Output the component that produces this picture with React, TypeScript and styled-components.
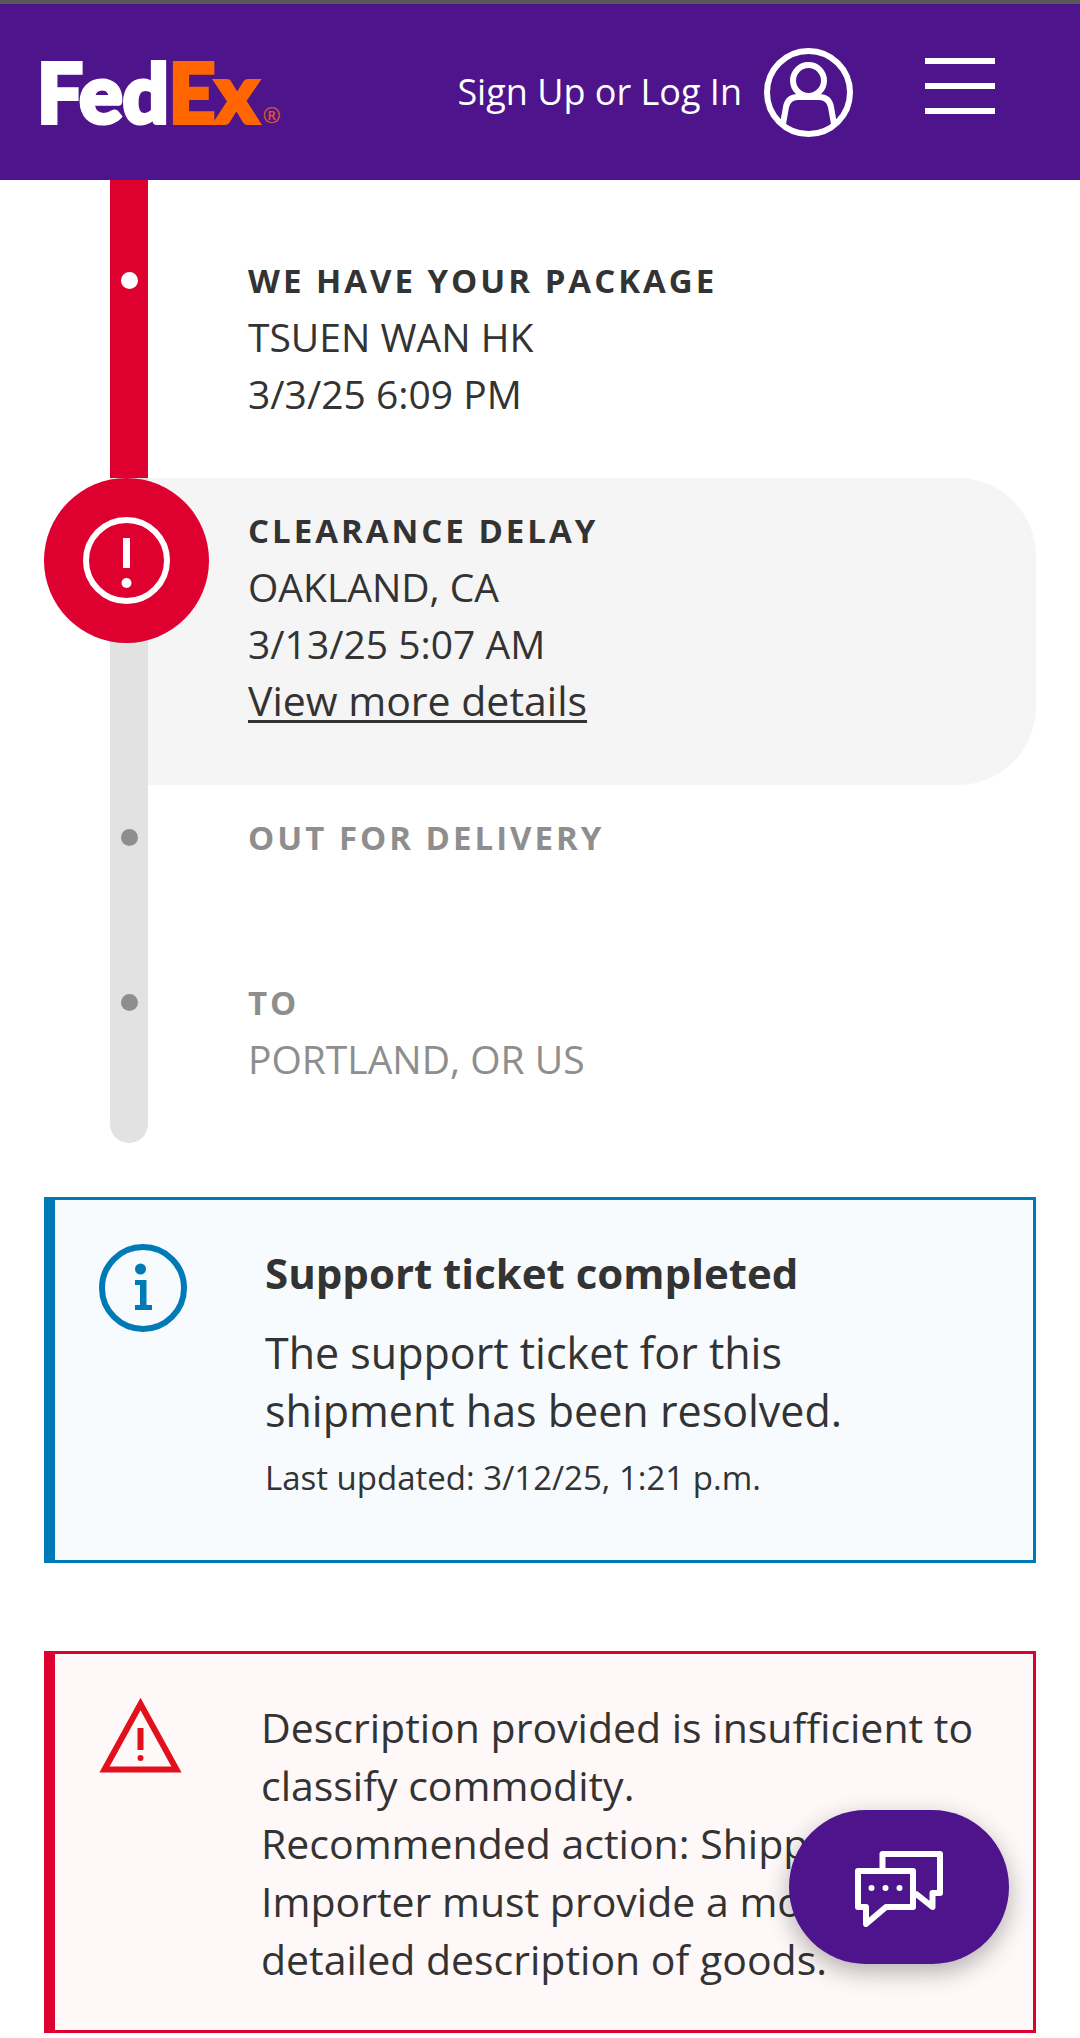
import React from "react";
import styled, { createGlobalStyle, css } from "styled-components";

const color = {
  purple: "#4d148c",
  orange: "#ff6600",
  red: "#de002e",
  alertRed: "#e1101c",
  blue: "#007ab7",
  ink: "#333333",
  muted: "#8e8e8e",
  rail: "#e2e2e2",
  panel: "#f5f5f5",
};

const GlobalStyle = createGlobalStyle`
  *, *::before, *::after { box-sizing: border-box; }
  body {
    margin: 0;
    background: #ffffff;
    color: ${color.ink};
    font-family: "Open Sans", "Noto Sans", sans-serif;
  }
  h2, p, ol { margin: 0; padding: 0; }
`;

const Header = styled.header`
  display: flex;
  align-items: center;
  height: 180px;
  padding: 0 85px 0 37px;
  border-top: 4px solid #5a5858;
  background: ${color.purple};
`;

const Logo = styled.a`
  display: flex;
  align-items: baseline;
  margin-right: auto;
  color: #ffffff;
  font-family: Lato, sans-serif;
  font-size: 81px;
  font-weight: 900;
  line-height: 100px;
  text-decoration: none;
  -webkit-text-stroke: 4px currentColor;
`;

const LogoAccent = styled.span`
  color: ${color.orange};
`;

const LogoMark = styled.span`
  margin-left: 4px;
  color: #d9572f;
  font-family: "Open Sans", sans-serif;
  font-size: 22px;
  font-weight: 600;
  line-height: 22px;
  -webkit-text-stroke: 0;
`;

const SignIn = styled.a`
  display: flex;
  align-items: center;
  gap: 22px;
  color: #ffffff;
  font-size: 36px;
  line-height: 48px;
  text-decoration: none;
  white-space: nowrap;
`;

const MenuButton = styled.button`
  display: flex;
  flex-direction: column;
  gap: 19px;
  width: 70px;
  margin: 0 0 12px 72px;
  padding: 0;
  border: 0;
  background: none;
`;

const MenuLine = styled.span`
  height: 6px;
  background: #ffffff;
`;

const Main = styled.main`
  padding: 0 44px 5px;
`;

const Timeline = styled.ol`
  padding-left: 66px;
  list-style: none;
`;

const Step = styled.li<{ $lead?: boolean }>`
  --lead: ${(p) => (p.$lead ? "48px" : "0px")};
  display: grid;
  grid-template-columns: 38px 1fr;
  min-height: 165px;
`;

const Rail = styled.div<{ $done?: boolean; $last?: boolean }>`
  position: relative;
  display: flex;
  justify-content: center;
  padding-top: calc(var(--lead) + 44px);
  border-radius: ${(p) => (p.$last ? "0 0 19px 19px" : "0")};
  background: ${(p) => (p.$done ? color.red : color.rail)};
`;

const Dot = styled.span<{ $done?: boolean }>`
  width: 17px;
  height: 17px;
  border-radius: 50%;
  background: ${(p) => (p.$done ? "#ffffff" : color.muted)};
`;

const DelayBadge = styled.span`
  position: absolute;
  top: 0;
  left: -66px;
  display: grid;
  place-items: center;
  width: 165px;
  height: 165px;
  border-radius: 50%;
  background: ${color.red};
`;

const StepBody = styled.div<{ $current?: boolean; $muted?: boolean }>`
  padding: calc(var(--lead) + 26px) 40px 56px 100px;
  color: ${(p) => (p.$muted ? color.muted : color.ink)};
  ${(p) =>
    p.$current &&
    css`
      border-radius: 0 78px 78px 0;
      background: ${color.panel};
    `}
`;

const StepTitle = styled.h2`
  font-size: 33px;
  font-weight: 700;
  line-height: 54px;
  letter-spacing: 3px;
`;

const StepText = styled.p`
  font-size: 39px;
  line-height: 57px;
`;

const DetailsLink = styled.a`
  color: inherit;
  font-size: 41px;
  text-decoration-thickness: 3px;
  text-underline-offset: 4px;
`;

const Alert = styled.section<{ $tone: "info" | "error" }>`
  display: flex;
  align-items: flex-start;
  gap: 78px;
  margin-top: ${(p) => (p.$tone === "info" ? "54px" : "88px")};
  padding: 44px 24px 42px 44px;
  border: 3px solid ${(p) => (p.$tone === "info" ? color.blue : color.red)};
  border-left-width: 11px;
  background: ${(p) => (p.$tone === "info" ? "#f7fbfe" : "#fff8f8")};
  svg { flex: none; }
`;

const AlertTitle = styled.h2`
  margin-bottom: 22px;
  font-size: 42px;
  font-weight: 700;
  line-height: 58px;
`;

const AlertText = styled.p<{ $dense?: boolean }>`
  font-size: ${(p) => (p.$dense ? "41px" : "43px")};
  line-height: 58px;
`;

const AlertNote = styled.p`
  margin: 16px 0 18px;
  font-size: 33px;
  line-height: 44px;
`;

const ChatButton = styled.button`
  position: fixed;
  right: 71px;
  bottom: 74px;
  display: grid;
  place-items: center;
  width: 220px;
  height: 154px;
  padding: 4px 0 0;
  border: 0;
  border-radius: 77px;
  background: ${color.purple};
  box-shadow: 0 8px 24px rgba(0, 0, 0, 0.3);
`;

const UserIcon = () => (
  <svg width="89" height="89" viewBox="0 0 89 89" fill="none" stroke="#fff" strokeWidth="6" aria-hidden="true">
    <circle cx="44.500" cy="44.500" r="41.500" />
    <circle cx="44.500" cy="32.500" r="15.500" />
    <path d="M19 76 L22 59 Q24 49 34 49 H55 Q65 49 67 59 L70 76" />
  </svg>
);

const DelayIcon = () => (
  <svg width="87" height="87" viewBox="0 0 87 87" aria-hidden="true">
    <circle cx="43.500" cy="43.500" r="40.500" fill="none" stroke="#fff" strokeWidth="6" />
    <rect x="40" y="21" width="7" height="30" fill="#fff" />
    <circle cx="43.500" cy="66" r="5" fill="#fff" />
  </svg>
);

const InfoIcon = () => (
  <svg width="88" height="88" viewBox="0 0 88 88" fill={color.blue} aria-hidden="true">
    <circle cx="44" cy="44" r="41" fill="none" stroke={color.blue} strokeWidth="6" />
    <circle cx="41.500" cy="25" r="5.500" />
    <path d="M36 36 H47.500 V61 H53 V66 H36 V61 H41 V41 H36 Z" />
  </svg>
);

const WarningIcon = () => (
  <svg width="84" height="76" viewBox="0 0 84 76" fill={color.alertRed} aria-hidden="true">
    <path d="M41.500 6 L77.500 71.500 H5.500 Z" fill="none" stroke={color.alertRed} strokeWidth="6" />
    <rect x="38.500" y="30" width="6" height="22" />
    <circle cx="41.500" cy="60" r="3" />
  </svg>
);

const ChatIcon = () => (
  <svg width="88" height="76" viewBox="0 0 88 76" fill="none" stroke="#fff" strokeWidth="6" strokeLinejoin="round" aria-hidden="true">
    <path d="M27.500 18 V3 H85 V42 H77.500 V56 L60 42" />
    <path d="M3 20 H58 V56 H31 L11 73 V56 H3 Z" />
    <g fill="#fff" stroke="none">
      <circle cx="16.500" cy="37" r="3" />
      <circle cx="30.500" cy="37" r="3" />
      <circle cx="44.500" cy="37" r="3" />
    </g>
  </svg>
);

export default function App() {
  return (
    <>
      <GlobalStyle />
      <Header>
        <Logo href="#">
          <span>Fed</span>
          <LogoAccent>Ex</LogoAccent>
          <LogoMark>®</LogoMark>
        </Logo>
        <SignIn href="#">
          Sign Up or Log In
          <UserIcon />
        </SignIn>
        <MenuButton aria-label="Menu">
          <MenuLine />
          <MenuLine />
          <MenuLine />
        </MenuButton>
      </Header>
      <Main>
        <Timeline>
          <Step $lead>
            <Rail $done>
              <Dot $done />
            </Rail>
            <StepBody>
              <StepTitle>WE HAVE YOUR PACKAGE</StepTitle>
              <StepText>TSUEN WAN HK</StepText>
              <StepText>3/3/25 6:09 PM</StepText>
            </StepBody>
          </Step>
          <Step>
            <Rail>
              <DelayBadge>
                <DelayIcon />
              </DelayBadge>
            </Rail>
            <StepBody $current>
              <StepTitle>CLEARANCE DELAY</StepTitle>
              <StepText>OAKLAND, CA</StepText>
              <StepText>3/13/25 5:07 AM</StepText>
              <StepText>
                <DetailsLink href="#">View more details</DetailsLink>
              </StepText>
            </StepBody>
          </Step>
          <Step>
            <Rail>
              <Dot />
            </Rail>
            <StepBody $muted>
              <StepTitle>OUT FOR DELIVERY</StepTitle>
            </StepBody>
          </Step>
          <Step>
            <Rail $last>
              <Dot />
            </Rail>
            <StepBody $muted>
              <StepTitle>TO</StepTitle>
              <StepText>PORTLAND, OR US</StepText>
            </StepBody>
          </Step>
        </Timeline>
        <Alert $tone="info">
          <InfoIcon />
          <div>
            <AlertTitle>Support ticket completed</AlertTitle>
            <AlertText>
              The support ticket for this
              <br />
              shipment has been resolved.
            </AlertText>
            <AlertNote>Last updated: 3/12/25, 1:21 p.m.</AlertNote>
          </div>
        </Alert>
        <Alert $tone="error">
          <WarningIcon />
          <AlertText $dense>
            Description provided is insufficient to
            <br />
            classify commodity.
            <br />
            Recommended action: Shipper/
            <br />
            Importer must provide a more
            <br />
            detailed description of goods.
          </AlertText>
        </Alert>
      </Main>
      <ChatButton aria-label="Chat">
        <ChatIcon />
      </ChatButton>
    </>
  );
}
